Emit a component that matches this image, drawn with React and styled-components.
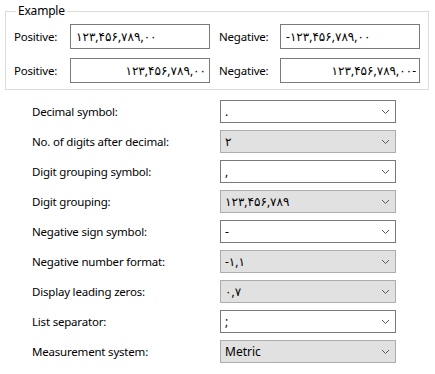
import React from 'react'
import styled, { createGlobalStyle } from 'styled-components'

const Global = createGlobalStyle`
    body {
        margin: 0;
        background: #ffffff;
        font-family: "Noto Sans", "DejaVu Sans", sans-serif;
        font-size: 11.5px;
        letter-spacing: -0.2px;
        color: #000000;
    }`

const Page = styled.div`
    width: 435px;
    height: 374px;
    padding-top: 4px;
    box-sizing: border-box;`

const Group = styled.fieldset`
    margin: 0 6px 0 5px;
    padding: 6px 8px 6px 8px;
    border: 1px solid #dcdcdc;
    min-width: 0;`

const Legend = styled.legend`
    padding: 0 2px;
    margin-left: 2px;
    line-height: 14px;
    font-size: 12px;`

const ExampleGrid = styled.div`
    display: grid;
    grid-template-columns: 56px 140px 70px 140px;
    row-gap: 9px;
    align-items: center;`

const ExLabel = styled.span`
    padding-left: ${p => p.$indent || 0}px;`

const Sample = styled.div`
    height: 25px;
    box-sizing: border-box;
    border: 1px solid #7a7a7a;
    display: flex;
    align-items: center;
    justify-content: ${p => (p.$rtl ? 'flex-end' : 'flex-start')};
    padding: 0 3px 0 5px;
    white-space: nowrap;
    font-size: 12px;
    letter-spacing: 0;`

const Settings = styled.div`
    display: grid;
    grid-template-columns: 188px 176px;
    row-gap: 7px;
    padding: 10px 0 0 32px;
    align-items: center;`

const Combo = styled.div`
    height: 23px;
    box-sizing: border-box;
    border: 1px solid ${p => (p.$list ? '#adadad' : '#7a7a7a')};
    background: ${p => (p.$list ? '#e1e1e1' : '#ffffff')};
    display: flex;
    align-items: center;
    justify-content: space-between;
    padding: 0 5px 0 4px;
    white-space: nowrap;
    font-size: 12px;
    letter-spacing: 0;`

const Chevron = () => (
    <svg width="9" height="6" viewBox="0 0 9 6">
        <path d="M1 1 L4.5 4.5 L8 1" fill="none" stroke="#5a5a5a" strokeWidth="1" />
    </svg>
)

const num = '۱۲۳,۴۵۶,۷۸۹,۰۰'

const settings = [
    ['Decimal symbol:', '.', false],
    ['No. of digits after decimal:', '۲', true],
    ['Digit grouping symbol:', ',', false],
    ['Digit grouping:', '۱۲۳,۴۵۶,۷۸۹', true],
    ['Negative sign symbol:', '-', false],
    ['Negative number format:', '-۱,۱', true],
    ['Display leading zeros:', '۰,۷', true],
    ['List separator:', ';', false],
    ['Measurement system:', 'Metric', true],
]

function App() {
    return (
        <Page>
            <Global />
            <Group>
                <Legend>Example</Legend>
                <ExampleGrid>
                    <ExLabel>Positive:</ExLabel>
                    <Sample>{num}</Sample>
                    <ExLabel $indent={9}>Negative:</ExLabel>
                    <Sample>-{num}</Sample>
                    <ExLabel>Positive:</ExLabel>
                    <Sample $rtl>{num}</Sample>
                    <ExLabel $indent={9}>Negative:</ExLabel>
                    <Sample $rtl>{num}-</Sample>
                </ExampleGrid>
            </Group>
            <Settings>
                {settings.map(([label, value, list]) => (
                    <React.Fragment key={label}>
                        <span>{label}</span>
                        <Combo $list={list}>
                            <span>{value}</span>
                            <Chevron />
                        </Combo>
                    </React.Fragment>
                ))}
            </Settings>
        </Page>
    )
}

export default App
